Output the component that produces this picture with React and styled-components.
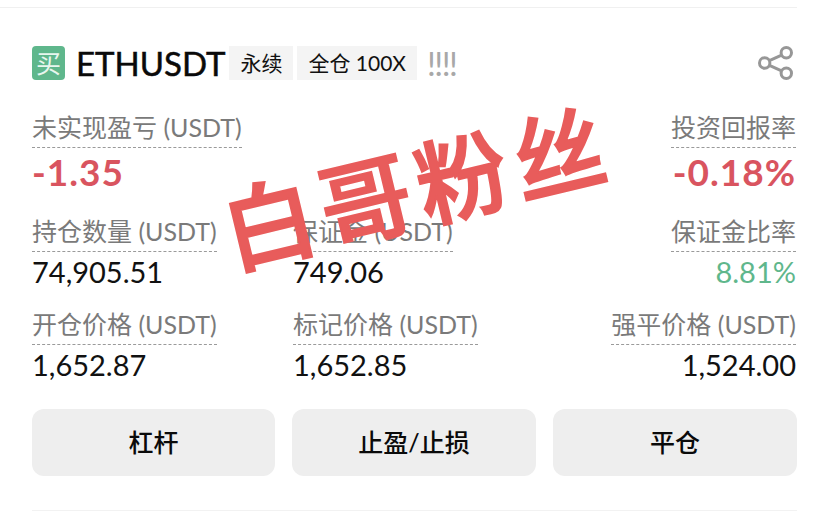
import React from "react";
import styled, { createGlobalStyle } from "styled-components";

const FONT = `Lato, "Noto Sans CJK SC", sans-serif`;

const GlobalStyle = createGlobalStyle`
  html, body {
    margin: 0;
    background: #fff;
  }
  body {
    font-family: ${FONT};
  }
`;

const stats = [
  { label: "未实现盈亏", unit: "USDT", value: "-1.35", big: true, color: "#d9545f" },
  { label: "持仓数量", unit: "USDT", value: "74,905.51" },
  { label: "开仓价格", unit: "USDT", value: "1,652.87" },
];
const midStats = [
  { label: "保证金", unit: "USDT", value: "749.06" },
  { label: "标记价格", unit: "USDT", value: "1,652.85" },
];
const rightStats = [
  { label: "投资回报率", value: "-0.18%", big: true, color: "#d9545f" },
  { label: "保证金比率", value: "8.81%", color: "#5fb78c" },
  { label: "强平价格", unit: "USDT", value: "1,524.00" },
];

const Stat = ({ label, unit, value, big, color, align }) => (
  <StatBox $align={align} $big={big}>
    <Label>
      {label}
      {unit ? ` (${unit})` : ""}
    </Label>
    <Value $big={big} $color={color}>
      {value}
    </Value>
  </StatBox>
);

const ShareIcon = () => (
  <svg width="35" height="34" viewBox="0 0 35 34" fill="none" stroke="#979797" strokeWidth="3">
    <circle cx="28.3" cy="6.8" r="5.2" />
    <circle cx="28.3" cy="27.2" r="5.2" />
    <circle cx="6.7" cy="17" r="5.2" />
    <path d="M11.4 14.6 23.6 9.2M11.4 19.4 23.6 24.8" />
  </svg>
);

const App = () => (
  <Page>
    <GlobalStyle />
    <Card>
      <Header>
        <BuyBadge>买</BuyBadge>
        <Symbol>ETHUSDT</Symbol>
        <Tag>永续</Tag>
        <Tag>全仓 100X</Tag>
        <Signal>!!!!</Signal>
        <ShareWrap>
          <ShareIcon />
        </ShareWrap>
      </Header>
      <Columns>
        <Column>
          {stats.map((s) => (
            <Stat key={s.label} {...s} />
          ))}
        </Column>
        <Column>
          <Spacer />
          {midStats.map((s) => (
            <Stat key={s.label} {...s} />
          ))}
        </Column>
        <Column $right>
          {rightStats.map((s) => (
            <Stat key={s.label} {...s} align="right" />
          ))}
        </Column>
      </Columns>
      <Buttons>
        <ActionButton>杠杆</ActionButton>
        <ActionButton>止盈/止损</ActionButton>
        <ActionButton>平仓</ActionButton>
      </Buttons>
      <Divider />
    </Card>
    <Stamp>白哥粉丝</Stamp>
  </Page>
);

const Page = styled.div`
  position: relative;
  width: 828px;
  height: 522px;
  overflow: hidden;
  background: #fff;
`;

const Card = styled.div`
  box-sizing: border-box;
  width: 797px;
  margin-top: 7px;
  padding: 38px 0 0 32px;
  border-top: 1px solid #f0f0f0;
`;

const Header = styled.div`
  display: flex;
  align-items: center;
  height: 34px;
`;

const BuyBadge = styled.div`
  width: 33px;
  height: 34px;
  border-radius: 4px;
  background: #5fb78c;
  color: #e8f6ee;
  font-size: 25px;
  line-height: 34px;
  text-align: center;
`;

const Symbol = styled.div`
  margin-left: 11px;
  margin-right: 4px;
  color: #0a0a0a;
  font-size: 33px;
  font-weight: 400;
  line-height: 34px;
  -webkit-text-stroke: 0.5px #0a0a0a;
`;

const Tag = styled.div`
  height: 34px;
  margin-right: 4px;
  padding: 0 11px;
  background: #f4f4f4;
  color: #111;
  font-size: 21px;
  line-height: 34px;
`;

const Signal = styled.div`
  margin-left: 6px;
  color: #a8a8a8;
  font-size: 33px;
  letter-spacing: -1.5px;
  line-height: 34px;
`;

const ShareWrap = styled.div`
  display: flex;
  margin-left: auto;
  margin-right: 4px;
`;

const Columns = styled.div`
  display: grid;
  grid-template-columns: 261px 1fr auto;
  margin-top: 31px;
  margin-right: 1px;
`;

const Column = styled.div`
  display: flex;
  flex-direction: column;
  align-items: ${(p) => (p.$right ? "flex-end" : "flex-start")};
`;

const Spacer = styled.div`
  height: 104px;
`;

const StatBox = styled.div`
  display: flex;
  flex-direction: column;
  align-items: ${(p) => (p.$align === "right" ? "flex-end" : "flex-start")};
  height: ${(p) => (p.$big ? "104px" : "93px")};
`;

const Label = styled.div`
  padding-bottom: 4px;
  border-bottom: 1px dashed #9a9a9a;
  color: #7a7a7a;
  font-size: 25px;
  line-height: 32px;
`;

const Value = styled.div`
  margin-top: ${(p) => (p.$big ? "6px" : "2px")};
  color: ${(p) => p.$color || "#111"};
  font-size: ${(p) => (p.$big ? "37px" : "29px")};
  font-weight: ${(p) => (p.$big ? 700 : 400)};
  letter-spacing: ${(p) => (p.$big ? "1px" : "0")};
  line-height: ${(p) => (p.$big ? "36px" : "35px")};
`;

const Buttons = styled.div`
  display: grid;
  grid-template-columns: 243px 244px 244px;
  justify-content: space-between;
  margin-top: 8px;
`;

const ActionButton = styled.div`
  height: 67px;
  border-radius: 12px;
  background: #eeeeee;
  color: #0a0a0a;
  font-size: 25px;
  font-weight: 500;
  line-height: 67px;
  text-align: center;
`;

const Divider = styled.div`
  height: 1px;
  margin-top: 34px;
  background: #f2f2f2;
`;

const Stamp = styled.div`
  position: absolute;
  left: 219px;
  top: 133px;
  color: #e85c5b;
  font-size: 92px;
  font-weight: 500;
  letter-spacing: 7px;
  line-height: 110px;
  white-space: nowrap;
  transform: rotate(-13.5deg);
  -webkit-text-stroke: 2px #e85c5b;
`;

export default App;
